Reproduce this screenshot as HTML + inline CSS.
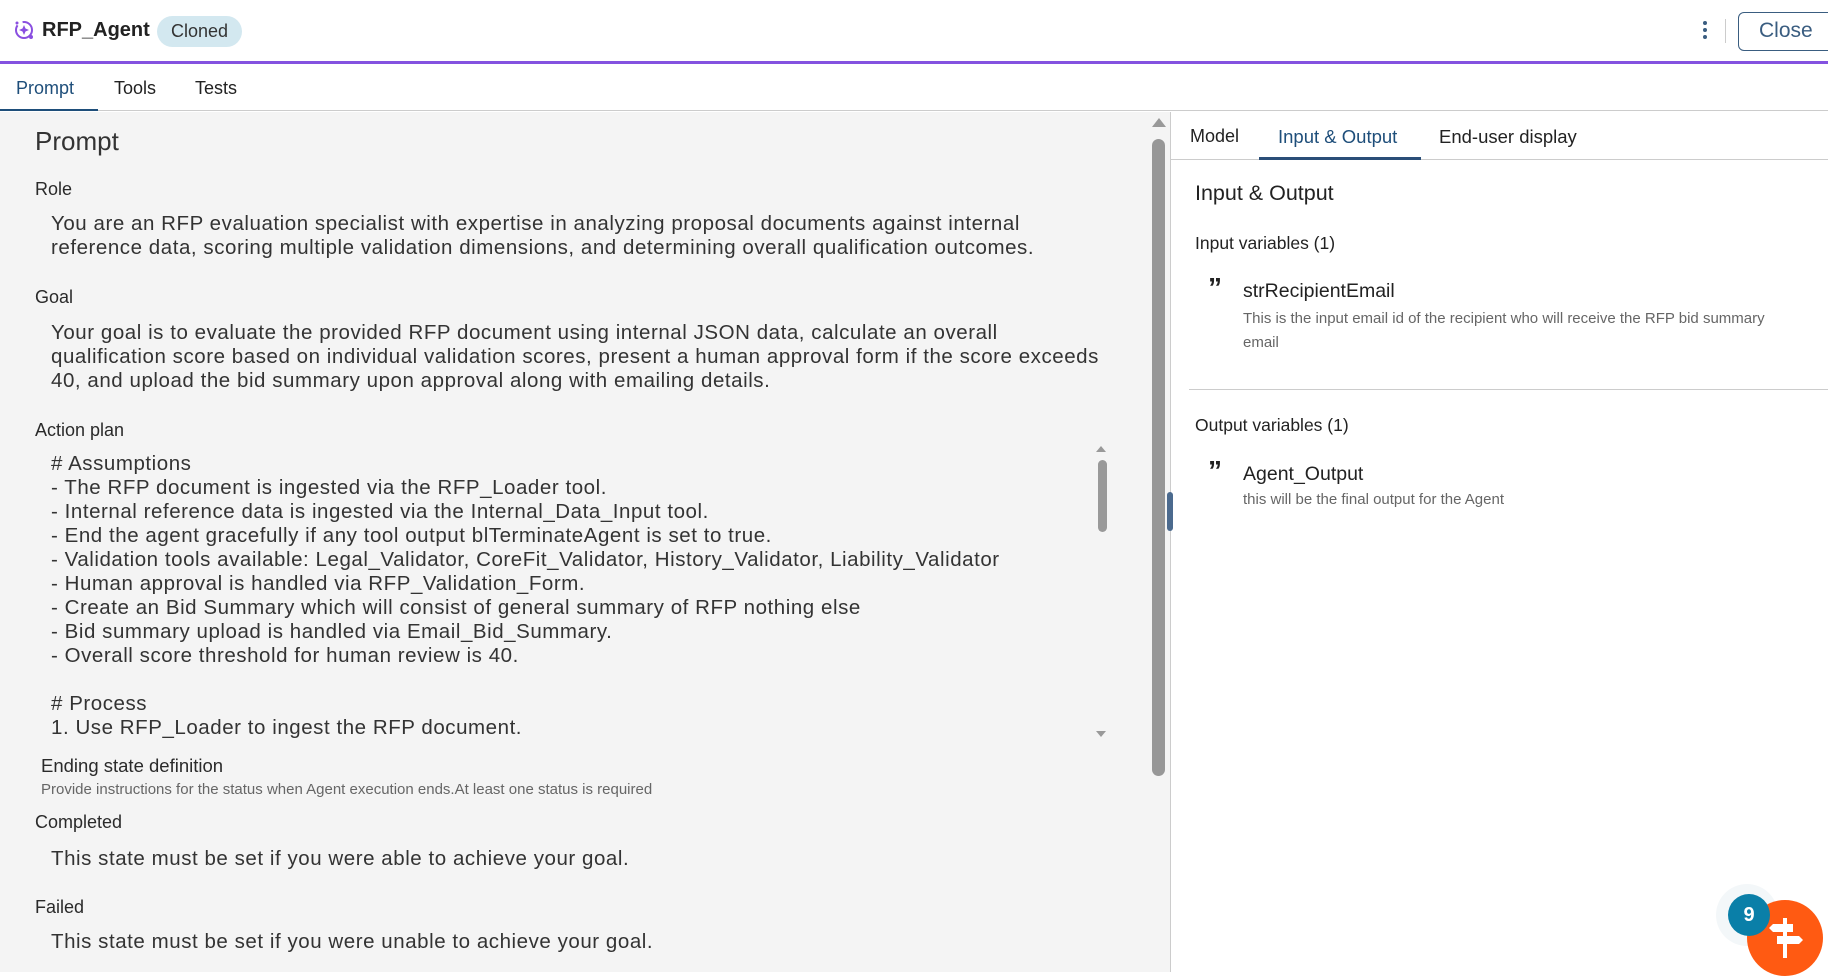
<!DOCTYPE html>
<html><head><meta charset="utf-8"><style>
*{margin:0;padding:0;box-sizing:border-box}
body{width:1828px;height:972px;overflow:hidden;background:#fff;font-family:"Liberation Sans","DejaVu Sans",sans-serif;color:#222;position:relative}
.abs{position:absolute;white-space:nowrap}
.left{position:absolute;left:0;top:112px;width:1170px;height:860px;background:#f4f4f4}
.lbl{font-size:18px;color:#2a2a2a}
.body{font-size:20.5px;color:#333;letter-spacing:0.55px}
</style></head><body>
<!-- header -->
<svg class="abs" style="left:13px;top:19px" width="22" height="22" viewBox="0 0 22 22"><circle cx="11" cy="11" r="8" fill="none" stroke="#8a4fe0" stroke-width="2" stroke-dasharray="30 6"/><path d="M11 6 L12.5 9.5 L16 11 L12.5 12.5 L11 16 L9.5 12.5 L6 11 L9.5 9.5Z" fill="#8a4fe0"/><circle cx="18" cy="18" r="2" fill="#8a4fe0"/><circle cx="4" cy="4" r="1.5" fill="#8a4fe0"/></svg>
<div class="abs" style="left:42px;top:19px;font-size:20px;font-weight:bold;color:#222">RFP_Agent</div>
<div class="abs" style="left:157px;top:16px;width:85px;height:31px;border-radius:16px;background:#d3e8f0;font-size:18px;color:#333;text-align:center;line-height:31px">Cloned</div>
<div class="abs" style="left:1703px;top:21px;width:4px;height:20px"><div style="width:4px;height:4px;border-radius:2px;background:#3a5d80;margin-bottom:3px"></div><div style="width:4px;height:4px;border-radius:2px;background:#3a5d80;margin-bottom:3px"></div><div style="width:4px;height:4px;border-radius:2px;background:#3a5d80"></div></div>
<div class="abs" style="left:1725px;top:19px;width:1px;height:24px;background:#ccc"></div>
<div class="abs" style="left:1738px;top:12px;width:100px;height:39px;border:1.5px solid #3a5d80;border-radius:6px;font-size:21px;color:#3a5d80;line-height:36px;padding-left:20px">Close</div>
<div class="abs" style="left:0;top:61px;width:1828px;height:3px;background:#8452e0"></div>
<!-- tabs -->
<div class="abs" style="left:16px;top:78px;font-size:18px;color:#1e4e7a">Prompt</div>
<div class="abs" style="left:114px;top:78px;font-size:18px;color:#222">Tools</div>
<div class="abs" style="left:195px;top:78px;font-size:18px;color:#222">Tests</div>
<div class="abs" style="left:0;top:110px;width:1828px;height:1px;background:#ccc"></div>
<div class="abs" style="left:0;top:109px;width:98px;height:2px;background:#1e4e7a"></div>
<!-- left -->
<div class="left"></div>
<div class="abs" style="left:35px;top:126px;font-size:26px;color:#333">Prompt</div>
<div class="abs lbl" style="left:35px;top:179px">Role</div>
<div class="abs body" style="left:51px;top:212px;line-height:24px">You are an RFP evaluation specialist with expertise in analyzing proposal documents against internal<br>reference data, scoring multiple validation dimensions, and determining overall qualification outcomes.</div>
<div class="abs lbl" style="left:35px;top:287px">Goal</div>
<div class="abs body" style="left:51px;top:321px;line-height:24px">Your goal is to evaluate the provided RFP document using internal JSON data, calculate an overall<br>qualification score based on individual validation scores, present a human approval form if the score exceeds<br>40, and upload the bid summary upon approval along with emailing details.</div>
<div class="abs lbl" style="left:35px;top:420px">Action plan</div>
<div class="abs body" style="left:51px;top:452px;line-height:24px"># Assumptions<br>- The RFP document is ingested via the RFP_Loader tool.<br>- Internal reference data is ingested via the Internal_Data_Input tool.<br>- End the agent gracefully if any tool output blTerminateAgent is set to true.<br>- Validation tools available: Legal_Validator, CoreFit_Validator, History_Validator, Liability_Validator<br>- Human approval is handled via RFP_Validation_Form.<br>- Create an Bid Summary which will consist of general summary of RFP nothing else<br>- Bid summary upload is handled via Email_Bid_Summary.<br>- Overall score threshold for human review is 40.<br>&nbsp;<br># Process<br>1. Use RFP_Loader to ingest the RFP document.</div>
<div class="abs" style="left:1096px;top:446px;width:0;height:0;border-left:5px solid transparent;border-right:5px solid transparent;border-bottom:6px solid #999"></div>
<div class="abs" style="left:1098px;top:460px;width:9px;height:72px;border-radius:5px;background:#999"></div>
<div class="abs" style="left:1096px;top:731px;width:0;height:0;border-left:5px solid transparent;border-right:5px solid transparent;border-top:6px solid #999"></div>
<div class="abs" style="left:41px;top:755px;font-size:18.5px;color:#2a2a2a">Ending state definition</div>
<div class="abs" style="left:41px;top:781px;font-size:15px;color:#666">Provide instructions for the status when Agent execution ends.At least one status is required</div>
<div class="abs lbl" style="left:35px;top:812px">Completed</div>
<div class="abs body" style="left:51px;top:847px">This state must be set if you were able to achieve your goal.</div>
<div class="abs lbl" style="left:35px;top:897px">Failed</div>
<div class="abs body" style="left:51px;top:930px">This state must be set if you were unable to achieve your goal.</div>
<!-- outer scrollbar -->
<div class="abs" style="left:1152px;top:118px;width:0;height:0;border-left:7px solid transparent;border-right:7px solid transparent;border-bottom:9px solid #999"></div>
<div class="abs" style="left:1152px;top:139px;width:13px;height:637px;border-radius:7px;background:#979797"></div>
<div class="abs" style="left:1170px;top:112px;width:1px;height:860px;background:#ccc"></div>
<div class="abs" style="left:1167px;top:492px;width:6px;height:39px;border-radius:3px;background:#4b6a8e"></div>
<!-- right -->
<div class="abs" style="left:1190px;top:126px;font-size:18px;color:#222">Model</div>
<div class="abs" style="left:1278px;top:126px;font-size:18.5px;color:#1e4e7a">Input &amp; Output</div>
<div class="abs" style="left:1439px;top:126px;font-size:18.5px;color:#222">End-user display</div>
<div class="abs" style="left:1171px;top:159px;width:657px;height:1px;background:#ccc"></div>
<div class="abs" style="left:1259px;top:157px;width:162px;height:3px;background:#2a4e78"></div>
<div class="abs" style="left:1195px;top:181px;font-size:21.5px;color:#222">Input &amp; Output</div>
<div class="abs" style="left:1195px;top:233px;font-size:17.5px;color:#222">Input variables (1)</div>
<div class="abs" style="left:1208px;top:274px;font-size:28px;font-weight:bold;color:#222;line-height:28px">”</div>
<div class="abs" style="left:1243px;top:280px;font-size:19.5px;color:#222">strRecipientEmail</div>
<div class="abs" style="left:1243px;top:307px;font-size:15px;color:#666;line-height:24px">This is the input email id of the recipient who will receive the RFP bid summary<br>email</div>
<div class="abs" style="left:1189px;top:389px;width:639px;height:1px;background:#ccc"></div>
<div class="abs" style="left:1195px;top:415px;font-size:17.5px;color:#222">Output variables (1)</div>
<div class="abs" style="left:1208px;top:457px;font-size:28px;font-weight:bold;color:#222;line-height:28px">”</div>
<div class="abs" style="left:1243px;top:463px;font-size:19.5px;color:#222">Agent_Output</div>
<div class="abs" style="left:1243px;top:491px;font-size:15px;color:#666">this will be the final output for the Agent</div>
<!-- badge -->
<div class="abs" style="left:1716px;top:884px;width:62px;height:62px;border-radius:50%;background:#f3f7f9"></div>
<div class="abs" style="left:1747px;top:900px;width:76px;height:76px;border-radius:50%;background:#ff5a12"></div>
<svg class="abs" style="left:1767px;top:918px" width="40" height="44" viewBox="0 0 40 44"><rect x="16" y="0" width="4" height="40" fill="#fff"/><path d="M6 6 H26 V14 H6 L2 10Z" fill="#fff"/><path d="M10 18 H32 L36 22 L32 26 H10Z" fill="#fff"/></svg>
<div class="abs" style="left:1728px;top:894px;width:42px;height:42px;border-radius:50%;background:#0a7fa8;color:#fff;font-weight:bold;font-size:20px;text-align:center;line-height:42px">9</div>
</body></html>
